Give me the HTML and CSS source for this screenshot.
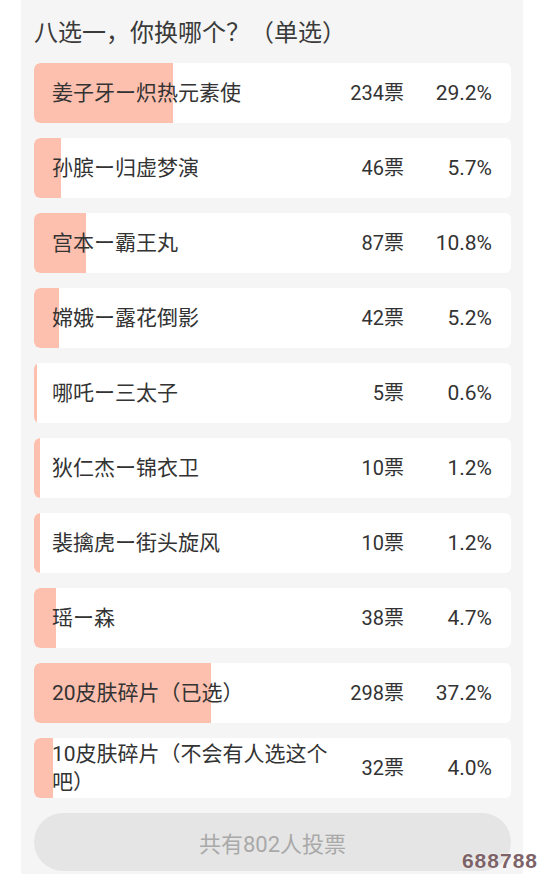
FILE: index.html
```html
<!DOCTYPE html>
<html lang="zh-CN">
<head>
    <meta charset="UTF-8">
    <meta name="viewport" content="width=device-width, initial-scale=1.0">
    <title>投票结果</title>
    <link rel="stylesheet" href="styles.css">
</head>
<body>
    <div class="panel">
        <h2 class="poll-title">八选一，你换哪个？（单选）</h2>

        <div class="options">
            <div class="option">
                <div class="bar" style="width: 29.2%"></div>
                <span class="label">姜子牙ー炽热元素使</span>
                <span class="votes">234票</span>
                <span class="percent">29.2%</span>
            </div>
            <div class="option">
                <div class="bar" style="width: 5.7%"></div>
                <span class="label">孙膑ー归虚梦演</span>
                <span class="votes">46票</span>
                <span class="percent">5.7%</span>
            </div>
            <div class="option">
                <div class="bar" style="width: 10.8%"></div>
                <span class="label">宫本ー霸王丸</span>
                <span class="votes">87票</span>
                <span class="percent">10.8%</span>
            </div>
            <div class="option">
                <div class="bar" style="width: 5.2%"></div>
                <span class="label">嫦娥ー露花倒影</span>
                <span class="votes">42票</span>
                <span class="percent">5.2%</span>
            </div>
            <div class="option">
                <div class="bar" style="width: 0.6%"></div>
                <span class="label">哪吒ー三太子</span>
                <span class="votes">5票</span>
                <span class="percent">0.6%</span>
            </div>
            <div class="option">
                <div class="bar" style="width: 1.2%"></div>
                <span class="label">狄仁杰ー锦衣卫</span>
                <span class="votes">10票</span>
                <span class="percent">1.2%</span>
            </div>
            <div class="option">
                <div class="bar" style="width: 1.2%"></div>
                <span class="label">裴擒虎ー街头旋风</span>
                <span class="votes">10票</span>
                <span class="percent">1.2%</span>
            </div>
            <div class="option">
                <div class="bar" style="width: 4.7%"></div>
                <span class="label">瑶ー森</span>
                <span class="votes">38票</span>
                <span class="percent">4.7%</span>
            </div>
            <div class="option">
                <div class="bar" style="width: 37.2%"></div>
                <span class="label">20皮肤碎片（已选）</span>
                <span class="votes">298票</span>
                <span class="percent">37.2%</span>
            </div>
            <div class="option">
                <div class="bar" style="width: 4.0%"></div>
                <span class="label">10皮肤碎片（不会有人选这个吧）</span>
                <span class="votes">32票</span>
                <span class="percent">4.0%</span>
            </div>
        </div>

        <button class="total-btn">共有802人投票</button>
    </div>

    <div class="watermark">688788</div>
</body>
</html>
```

FILE: styles.css
```css
body {
    margin: 0;
    background: #fff;
    font-family: Roboto, "Noto Sans CJK SC", sans-serif;
    color: #333;
}
.panel {
    margin: 0 21px;
    background: #f5f5f5;
    padding: 18px 12px 2px 13px;
    min-height: 854px;
}
.poll-title {
    margin: 0 0 15px;
    font-size: 24px;
    font-weight: normal;
    line-height: 30px;
    color: #3a3a3a;
}
.options {
    display: flex;
    flex-direction: column;
    gap: 15px;
}
.option {
    position: relative;
    display: flex;
    align-items: center;
    min-height: 60px;
    padding: 0 19px 0 18px;
    background: #fff;
    border-radius: 6px;
    overflow: hidden;
    font-size: 20px;
}
.bar {
    position: absolute;
    left: 0;
    top: 0;
    bottom: 0;
    background: #fdbfae;
    border-radius: 6px 0 0 6px;
}
.label,
.votes,
.percent {
    position: relative;
    line-height: 28px;
}
.label {
    width: 282px;
    font-size: 21px;
}
.votes {
    flex: 1;
    text-align: right;
}
.percent {
    width: 88px;
    font-size: 21px;
    text-align: right;
}
.total-btn {
    display: block;
    width: 100%;
    height: 58px;
    margin-top: 15px;
    border: none;
    border-radius: 29px;
    background: #e5e5e5;
    color: #a9a9a9;
    font-family: Roboto, "Noto Sans CJK SC", sans-serif;
    font-size: 22px;
}
.watermark {
    position: absolute;
    right: 6px;
    top: 849px;
    font-family: "Liberation Sans", sans-serif;
    font-weight: bold;
    font-size: 21px;
    letter-spacing: 1px;
    color: #7d6367;
    text-shadow: 0 0 2px #fff;
}
```
